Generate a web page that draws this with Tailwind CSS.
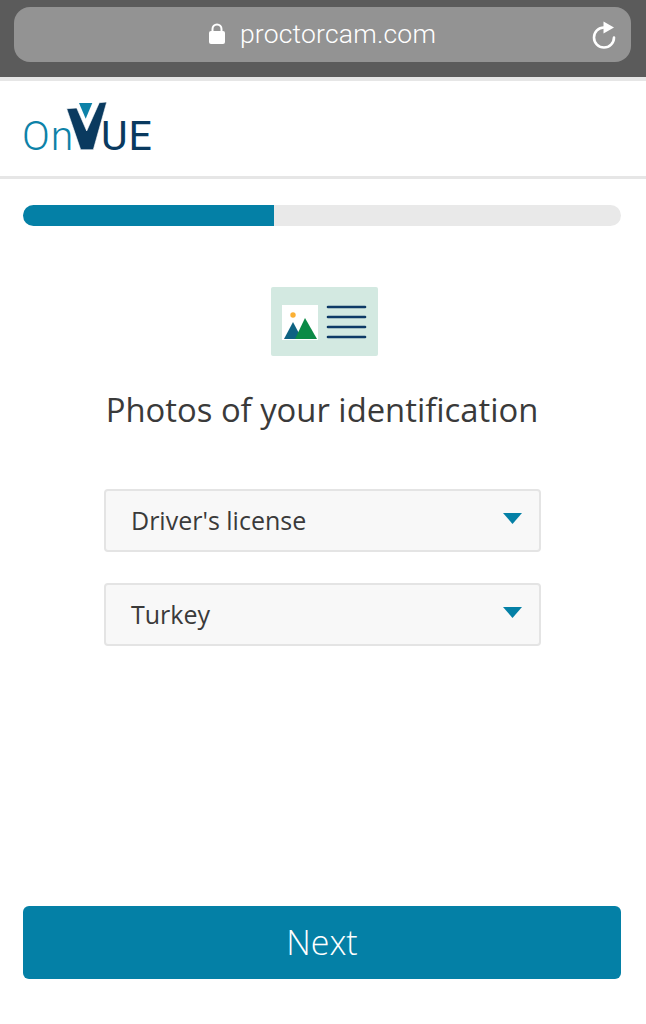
<!DOCTYPE html>
<html lang="en">
<head>
<meta charset="utf-8">
<script src="https://cdn.jsdelivr.net/npm/@tailwindcss/browser@4"></script>
</head>
<body class="bg-white font-['Open_Sans',sans-serif] text-[#3a3a3a]">
<div class="w-[646px] h-[1024px] flex flex-col overflow-hidden">
  <div class="h-[77px] shrink-0 bg-[#5b5b5b] pl-[14px] pr-[15px] pt-[7px]">
    <div class="relative h-[55px] rounded-[16px] bg-[#939393] flex items-center justify-center text-white">
      <svg class="mr-[15px] mt-[-3px]" width="16" height="21" viewBox="0 0 16 21" fill="none">
        <path d="M3.500 9V6a4.500 4.500 0 0 1 9 0v3" stroke="white" stroke-width="2"/>
        <rect x="0" y="8" width="16" height="13" rx="2" fill="white"/>
      </svg>
      <span class="font-['Roboto',sans-serif] font-light text-[26.500px] leading-none tracking-[0.2px] pb-[1px]">proctorcam.com</span>
      <svg class="absolute right-[14px] top-[14px]" width="26" height="28" viewBox="0 0 26 28" fill="none">
        <path d="M13 6.500a10 10 0 1 0 10 10" stroke="white" stroke-width="2.600" stroke-linecap="round"/>
        <path d="M12.500 0.500L23 6.500L12.500 12.500Z" fill="white"/>
      </svg>
    </div>
  </div>
  <div class="h-[102px] shrink-0 bg-white border-t-[4px] border-b-[3px] border-[#e6e6e6] pl-[23px]">
    <div class="relative w-[130px] h-[95px]">
      <span class="absolute left-[-1px] top-[27px] text-[#0d82a8] text-[41px] leading-[56px] font-['Roboto',sans-serif] font-light tracking-[1px]">On</span>
      <span class="absolute left-[78px] top-[27px] text-[#0a3a5f] text-[41px] leading-[56px] font-['Roboto',sans-serif] tracking-[1px]">UE</span>
      <svg class="absolute left-0 top-0" width="130" height="95" viewBox="0 0 130 95">
        <polygon points="56,22 69.300,22 62.700,37.700" fill="#0d82a8"/>
        <polygon points="43.700,27.700 53.700,27 63.700,50 76.300,21.700 83.700,21 70.300,68.700 57.700,68.700" fill="#0a3a5f" stroke="#fff" stroke-width="0.600"/>
      </svg>
    </div>
  </div>
  <div class="flex-1 flex flex-col pt-[26px] px-[23px] pb-[45px]">
    <div class="h-[21px] w-[598px] rounded-full bg-[#e9e9e9] overflow-hidden shrink-0">
      <div class="h-full w-[251px] bg-[#0480a6]"></div>
    </div>
    <div class="mt-[61px] ml-[248px] shrink-0">
      <svg class="block" width="107" height="69" viewBox="0 0 107 69">
        <rect width="107" height="69" rx="2" fill="#d3e9e1"/>
        <rect x="11" y="18" width="36" height="35" fill="#fff"/>
        <circle cx="22" cy="28" r="2.700" fill="#fbb034"/>
        <polygon points="13,52 22,35 31,52" fill="#0e6282"/>
        <polygon points="24,52 34,31 46,52" fill="#0a8a46"/>
        <g stroke="#0e3a66" stroke-width="2.600" stroke-linecap="round">
          <path d="M57 20H94"/><path d="M57 30H94"/><path d="M57 40H94"/><path d="M57 50H94"/>
        </g>
      </svg>
    </div>
    <h1 class="mt-[32px] text-center text-[32.800px] leading-[44px] font-normal pr-[2px]">Photos of your identification</h1>
    <div class="mt-[57px] ml-[81px] w-[437px] flex flex-col gap-[31px]">
      <div class="h-[63px] rounded-[4px] border-2 border-[#e4e4e4] bg-[#f8f8f8] flex items-center justify-between pl-[25px] pr-[17px]">
        <span class="text-[25px] leading-none">Driver's license</span>
        <svg class="mt-[-4px]" width="19" height="11" viewBox="0 0 19 11"><polygon points="0,0 19,0 9.500,11" fill="#0480a6"/></svg>
      </div>
      <div class="h-[63px] rounded-[4px] border-2 border-[#e4e4e4] bg-[#f8f8f8] flex items-center justify-between pl-[25px] pr-[17px]">
        <span class="text-[25px] leading-none">Turkey</span>
        <svg class="mt-[-4px]" width="19" height="11" viewBox="0 0 19 11"><polygon points="0,0 19,0 9.500,11" fill="#0480a6"/></svg>
      </div>
    </div>
    <button class="mt-auto h-[73px] w-[598px] shrink-0 rounded-[6px] bg-[#0480a6] text-white text-[34px] font-light flex items-center justify-center">Next</button>
  </div>
</div>
</body>
</html>
